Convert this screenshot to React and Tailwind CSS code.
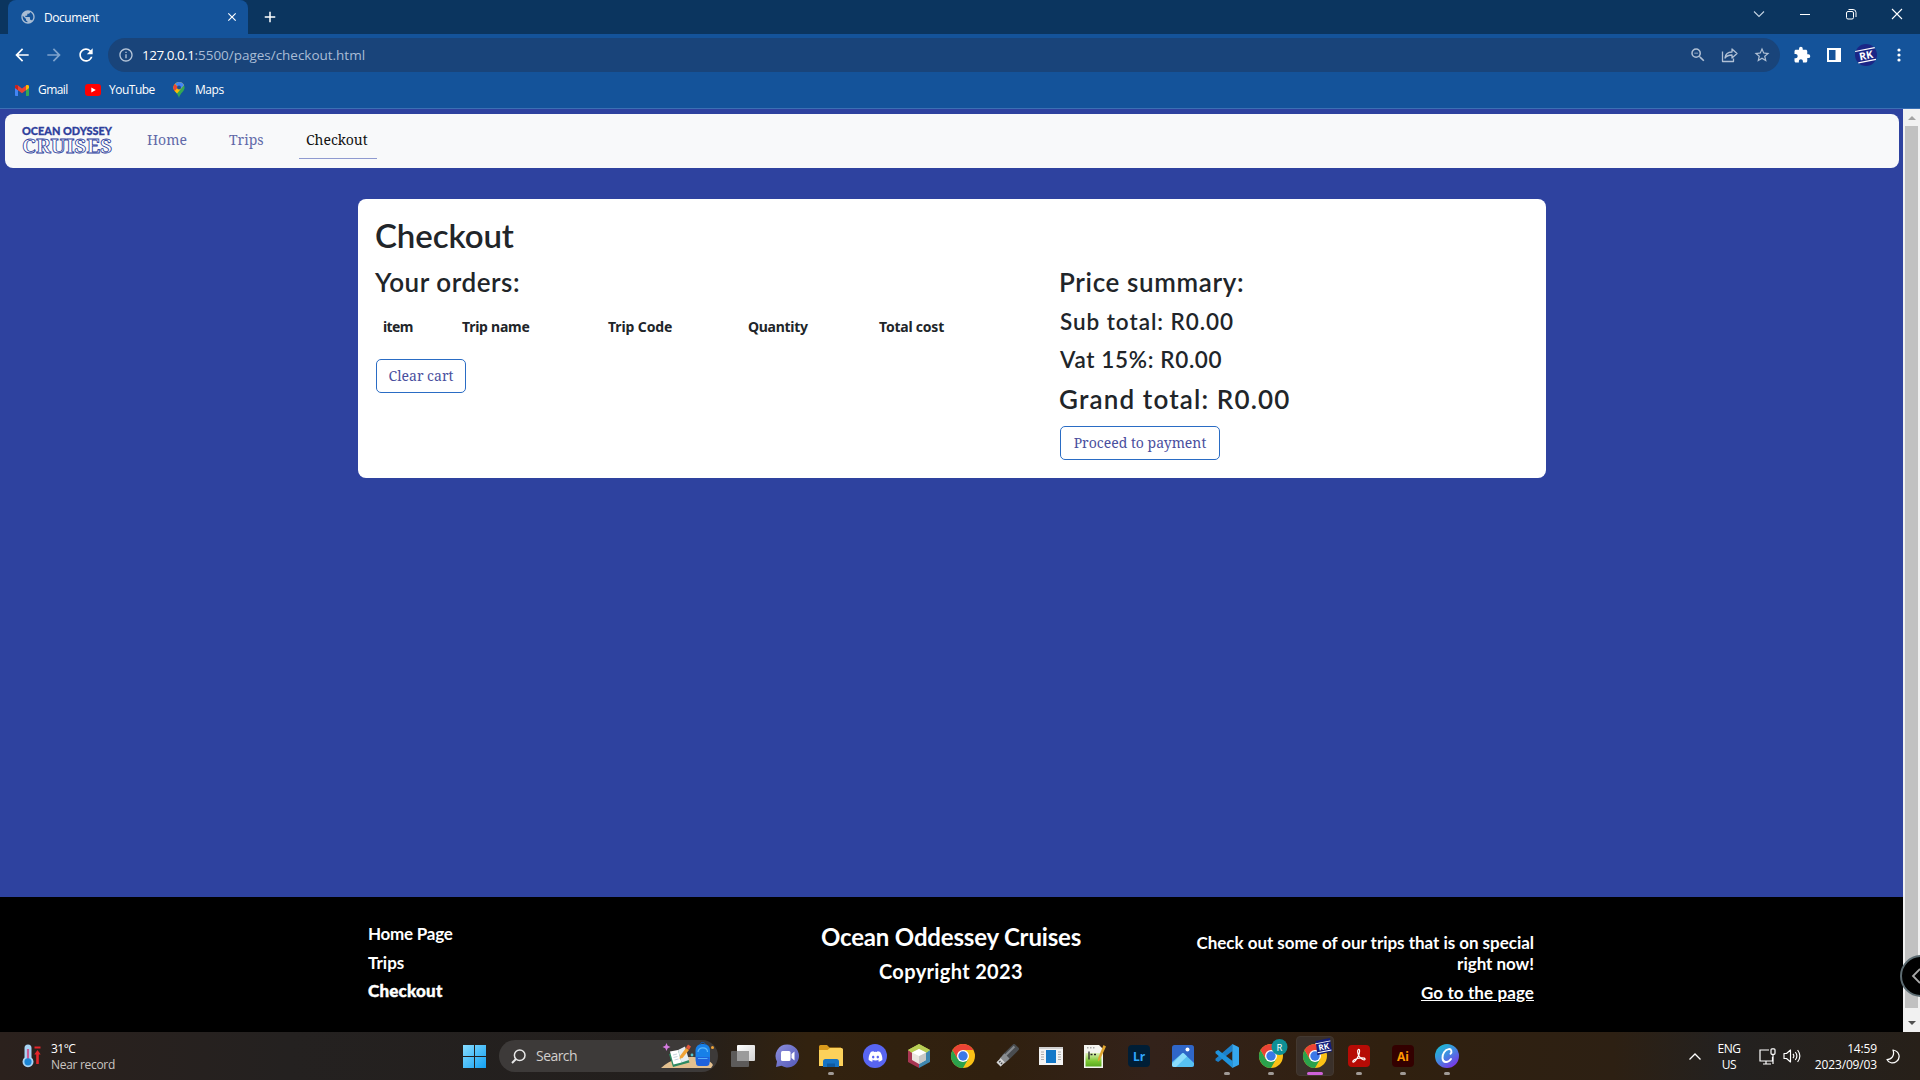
import React from "react";
import { MdExtension, MdStarBorder, MdInfoOutline, MdArrowBack, MdArrowForward, MdRefresh, MdPublic, MdZoomOut, MdClose, MdAdd } from "react-icons/md";
import { FaDiscord } from "react-icons/fa";

/* ---------- browser chrome ---------- */

function TabStrip() {
  return (
    <div className="flex h-[34px] bg-[#0b355f] text-white">
      <div className="ml-2 flex h-full w-[240px] items-center rounded-t-lg bg-[#14539a] pr-[9px] pl-3">
        <MdPublic className="size-4 text-[#a9bdd4]" />
        <span className="ml-2 pt-px text-[12px] leading-4 tracking-[-0.45px]">Document</span>
        <MdClose className="ml-auto size-[14px]" />
      </div>
      <MdAdd className="mt-[8px] ml-[13px] size-[18px]" />
      <div className="ml-auto flex pr-[17px]">
        <div className="flex h-7 w-[46px] items-center justify-center">
          <svg width="12" height="12" viewBox="0 0 12 12" fill="none" stroke="#c5d3e2" strokeWidth="1.1"><path d="M1 3.5l5 5 5-5" /></svg>
        </div>
        <div className="flex h-7 w-[46px] items-center justify-center">
          <svg width="12" height="12" viewBox="0 0 12 12" stroke="#fff" strokeWidth="1"><path d="M1 6.500h10" /></svg>
        </div>
        <div className="flex h-7 w-[46px] items-center justify-center">
          <svg width="12" height="12" viewBox="0 0 12 12" fill="none" stroke="#fff" strokeWidth="1"><rect x="1.5" y="3.500" width="7" height="7.500" rx="1.500" /><path d="M3.500 1.500h4.500a3 3 0 0 1 3 3v4.500" /></svg>
        </div>
        <div className="flex h-7 w-[29px] items-center justify-end">
          <svg width="12" height="12" viewBox="0 0 12 12" stroke="#fff" strokeWidth="1.1"><path d="M1 1l10 10M11 1L1 11" /></svg>
        </div>
      </div>
    </div>
  );
}

function Toolbar() {
  return (
    <div className="flex h-[41px] items-center bg-[#14539a] text-white">
      <MdArrowBack className="ml-3 size-5" />
      <MdArrowForward className="ml-3 size-5 text-[#7ea3cd]" />
      <MdRefresh className="ml-3 size-5" />
      <div className="ml-[12px] flex h-[34px] w-[1672px] items-center rounded-full bg-[#19447a] pr-[9px] pl-[10px]">
        <MdInfoOutline className="size-4 text-[#b5c5d9]" />
        <span className="ml-2 text-[13.5px] leading-5 tracking-[-0.02px] text-[#a9bdd6]">
          <span className="tracking-[-0.5px] text-white">127.0.0.1</span>:5500/pages/checkout.html
        </span>
        <MdZoomOut className="ml-auto size-[18px] text-[#b0c0d5]" />
        <svg className="ml-[14px]" width="17" height="16" viewBox="0 0 17 16" fill="none" stroke="#b0c0d5" strokeWidth="1.3"><path d="M1.500 4.500v10h11v-3M4 11c.5-4 2.500-6 7-6V2l5 4.500L11 11V8c-3.500 0-5.500 1-7 3z" strokeLinejoin="round" /></svg>
        <MdStarBorder className="ml-[15px] size-[18px] text-[#b0c0d5]" />
      </div>
      <MdExtension className="ml-[13px] size-[18px]" />
      <svg className="ml-4" width="14" height="14" viewBox="0 0 14 14"><path d="M1 1h12v12H1z" fill="none" stroke="#fff" strokeWidth="2" /><path d="M8.500 0H14v14H8.500z" fill="#fff" /></svg>
      <svg className="ml-[14px]" width="22" height="22" viewBox="0 0 22 22">
        <circle cx="11" cy="11" r="11" fill="#1b2686" />
        <RkMark />
      </svg>
      <svg className="ml-5" width="4" height="14" viewBox="0 0 4 14" fill="#fff"><circle cx="2" cy="2" r="1.600" /><circle cx="2" cy="7" r="1.600" /><circle cx="2" cy="12" r="1.600" /></svg>
    </div>
  );
}

function RkMark() {
  return (
    <g transform="rotate(-11 11 11)">
      <path d="M1 5.500h20M2 17.200h18" stroke="#fff" strokeWidth="1.200" />
      <text x="11" y="15.200" textAnchor="middle" fontFamily="Open Sans" fontSize="10.500" fontWeight="700" fill="#fff">RK</text>
    </g>
  );
}

function Bookmarks() {
  return (
    <div className="flex h-[34px] items-center border-b border-[#3c70b4] bg-[#14539a] pb-[3px] pl-[15px] text-[12px] leading-4 text-white">
      <svg width="14" height="11" viewBox="0 0 14 11"><path d="M0 2v8.200c0 .5.300.800.800.800H3V5z" fill="#4285f4" /><path d="M14 2v8.200c0 .5-.3.800-.8.800H11V5z" fill="#34a853" /><path d="M0 1.600C0 .200 1.600-.500 2.700.300L7 3.600 11.300.300C12.400-.500 14 .200 14 1.600V3L7 8.200 0 3z" fill="#ea4335" /><path d="M11.300.300C12.400-.500 14 .200 14 1.600V3l-3 2.200V.500z" fill="#fbbc04" /><path d="M0 1.600C0 .200 1.600-.500 2.700.300L3 .500v4.700L0 3z" fill="#c5221f" /></svg>
      <span className="ml-[9px] w-[47px] tracking-[-0.55px]">Gmail</span>
      <svg width="16" height="12" viewBox="0 0 16 12"><rect width="16" height="12" rx="3" fill="#f00" /><path d="M6.300 3.400v5.200L10.800 6z" fill="#fff" /></svg>
      <span className="ml-2 w-[64px] tracking-[-0.5px]">YouTube</span>
      <svg width="12" height="16" viewBox="0 0 12 16">
        <path d="M6 0a5.600 5.600 0 0 1 5.600 5.600C11.600 9.500 7.300 10.800 6 16 4.700 10.800.4 9.500.4 5.600A5.600 5.600 0 0 1 6 0z" fill="#34a853" />
        <path d="M6 0a5.600 5.600 0 0 1 5 3.200L4 11.500C2 9.600.4 8.200.4 5.600A5.600 5.600 0 0 1 6 0z" fill="#fbbc04" />
        <path d="M6 0a5.600 5.600 0 0 1 5 3.200L7.500 7 2 2C3 .800 4.400 0 6 0z" fill="#4285f4" />
        <path d="M1.700 2L5 5 1.600 9.200C.900 8.200.4 7 .4 5.600c0-1.400.5-2.600 1.300-3.600z" fill="#ea4335" />
        <circle cx="6" cy="5.600" r="2" fill="#1a4f94" />
      </svg>
      <span className="ml-[10px] tracking-[-0.45px]">Maps</span>
    </div>
  );
}

/* ---------- web page ---------- */

function Logo() {
  return (
    <svg className="overflow-visible" width="94" height="34" viewBox="0 0 94 34">
      <text x="1" y="10.200" textLength="90" lengthAdjust="spacingAndGlyphs" fontFamily="Lato" fontWeight="900" fontSize="11.500" fill="#2e3f9c" stroke="#2e3f9c" strokeWidth="0.300">OCEAN ODYSSEY</text>
      <text x="1" y="27.800" textLength="90" lengthAdjust="spacingAndGlyphs" fontFamily="Noto Serif, Liberation Serif" fontWeight="700" fontSize="19.500" fill="#fff" stroke="#2e3f9c" strokeWidth="0.800">CRUISES</text>
    </svg>
  );
}

function Navbar() {
  return (
    <nav className="mr-1 ml-[5px] flex h-[54px] rounded-lg bg-[#f8f9fa] font-['Noto_Serif','DejaVu_Serif_Condensed',serif] text-[14px] leading-5">
      <div className="ml-4 pt-[11px]"><Logo /></div>
      <div className="flex pt-4 text-[#6169a8]">
        <span className="ml-8 w-[82px]">Home</span>
        <span className="w-[70px]">Trips</span>
        <span className="h-[29px] w-[78px] border-b border-[#8f9ad0] pl-[7px] text-[#111]">Checkout</span>
      </div>
    </nav>
  );
}

function OutlineButton({ className, children }) {
  return (
    <button className={"block h-[34px] rounded-[5px] border border-[#2a6cc4] text-center font-['Noto_Serif','DejaVu_Serif_Condensed',serif] text-[14px] leading-5 font-normal whitespace-nowrap text-[#4a4f9e] " + className}>
      {children}
    </button>
  );
}

function CheckoutCard() {
  return (
    <main className="mt-[31px] ml-[358px] h-[279px] w-[1188px] rounded-lg bg-white pt-4 pl-[18px] font-[Lato] font-semibold text-[#212529]">
      <h1 className="-ml-px text-[33px] leading-10 tracking-[-0.1px]">Checkout</h1>
      <div className="flex pt-[11px]">
        <section className="w-[684px]">
          <h2 className="-ml-px text-[26px] leading-8 tracking-[0.55px]">Your orders:</h2>
          <div className="mt-[19px] flex pl-[7px] font-['Noto_Sans'] text-[14px] leading-5 font-bold">
            <span className="w-[79px] tracking-[-0.6px]">item</span>
            <span className="w-[146px] tracking-[-0.25px]">Trip name</span>
            <span className="w-[140px] tracking-[-0.1px]">Trip Code</span>
            <span className="w-[131px] tracking-[-0.28px]">Quantity</span>
            <span className="tracking-[-0.22px]">Total cost</span>
          </div>
          <OutlineButton className="mt-[22px] w-[90px]">Clear cart</OutlineButton>
        </section>
        <section>
          <h2 className="-ml-px text-[26px] leading-8 tracking-[0.65px]">Price summary:</h2>
          <h3 className="mt-2.5 text-[22.5px] leading-7 tracking-[0.95px]">Sub total: R0.00</h3>
          <h3 className="mt-2.5 text-[22.5px] leading-7 tracking-[0.65px]">Vat 15%: R0.00</h3>
          <h2 className="mt-[9px] -ml-px text-[26px] leading-8 tracking-[1.15px]">Grand total: R0.00</h2>
          <OutlineButton className="mt-[11px] w-[160px]">Proceed to payment</OutlineButton>
        </section>
      </div>
    </main>
  );
}

function Footer() {
  return (
    <footer className="mt-auto h-[135px] bg-black pt-px pl-[368px] font-[Lato] font-bold text-white">
      <div className="grid w-[1166px] grid-cols-3 text-[17px]">
        <div className="flex flex-col pt-[26px] leading-5">
          <a className="tracking-[-0.25px]">Home Page</a>
          <a className="mt-[9px]">Trips</a>
          <a className="mt-2 font-black tracking-[0.2px] [-webkit-text-stroke:0.4px_white]">Checkout</a>
        </div>
        <div className="pt-[25px] text-center">
          <p className="text-[24px] leading-7 tracking-[-0.18px]">Ocean Oddessey Cruises</p>
          <p className="mt-2 text-[20px] leading-6 tracking-[0.35px]">Copyright 2023</p>
        </div>
        <div className="pt-[34px] text-right leading-[21px] tracking-[-0.03px]">
          <p>Check out some of our trips that is on special<br />right now!</p>
          <a className="mt-2 block tracking-[0.1px] underline">Go to the page</a>
        </div>
      </div>
    </footer>
  );
}

function Scrollbar() {
  return (
    <div className="relative flex w-[17px] flex-col items-center bg-[#f1f1f1]">
      <div className="flex h-[17px] items-center"><svg width="8" height="4" viewBox="0 0 8 4"><path d="M0 4l4-4 4 4z" fill="#a3a3a3" /></svg></div>
      <div className="w-[13px] flex-1 bg-[#c1c1c1]" />
      <div className="flex h-6 items-center pt-1.5"><svg width="8" height="4" viewBox="0 0 8 4"><path d="M0 0l4 4 4-4z" fill="#505050" /></svg></div>
      <div className="absolute top-[846px] left-[-3px] h-[42px] w-5 overflow-hidden">
        <div className="flex size-[42px] items-center rounded-full border-2 border-[#5d6c72] bg-black pl-[9px]">
          <svg width="12" height="16" viewBox="0 0 12 16" fill="none" stroke="#a8a8a8" strokeWidth="1.800"><path d="M9 1L2 8l7 7" /></svg>
        </div>
      </div>
    </div>
  );
}

/* ---------- taskbar ---------- */

function Chrome({ badge }) {
  return (
    <svg className="overflow-visible" width="24" height="24" viewBox="0 0 24 24">
      <circle cx="12" cy="12" r="12" fill="#fbc116" />
      <path d="M17.200 15L12 24A12 12 0 0 1 1.600 6l5.200 9z" fill="#2ba24c" />
      <path d="M1.600 6A12 12 0 0 1 22.400 6H12l-5.200 9z" fill="#ea4335" />
      <circle cx="12" cy="12" r="6" fill="#fff" />
      <circle cx="12" cy="12" r="4.700" fill="#3b78e7" />
      {badge === "R" && (
        <g><circle cx="20.500" cy="3" r="8" fill="#0e8f96" /><text x="20.500" y="6.500" textAnchor="middle" fontSize="9.500" fontFamily="Open Sans" fill="#fff">R</text></g>
      )}
      {badge === "RK" && (
        <g transform="translate(12 -6) scale(.78)"><path d="M1 4l18-4 3 17-19 5z" fill="#141f7c" /><RkMark /></g>
      )}
    </svg>
  );
}

function AppTile({ bg, fg, children }) {
  return (
    <svg width="22" height="22" viewBox="0 0 22 22">
      <rect width="22" height="22" rx="4" fill={bg} />
      <text x="11" y="15.500" textAnchor="middle" fontSize="12" fontWeight="700" fontFamily="Open Sans" fill={fg}>{children}</text>
    </svg>
  );
}

const TaskView = () => (
  <svg width="24" height="22" viewBox="0 0 24 22">
    <defs><linearGradient id="tv" x1="0" y1="0" x2="1" y2="1"><stop stopColor="#fff" /><stop offset="1" stopColor="#d2d2d2" /></linearGradient></defs>
    <rect x="6" width="18" height="16" rx="1" fill="url(#tv)" /><path d="M1 6h17v15a1 1 0 0 1-1 1H1a1 1 0 0 1-1-1V7a1 1 0 0 1 1-1z" fill="#5d5b5a" /><path d="M6 6h12v10H6z" fill="#9b9b9b" />
  </svg>
);
const Teams = () => (
  <svg width="24" height="24" viewBox="0 0 24 24">
    <defs><linearGradient id="tm" x1="0" y1="0" x2="1" y2="1"><stop stopColor="#8d8fdc" /><stop offset="1" stopColor="#5358b8" /></linearGradient></defs>
    <path d="M12.500.500a11.500 11.500 0 1 1-6 21.300L1 23l1-5.500A11.500 11.500 0 0 1 12.500.500z" fill="url(#tm)" /><rect x="6" y="7" width="9.500" height="10" rx="1.500" fill="#fff" /><path d="M16.500 10l3-2.500v9l-3-2.500z" fill="#fff" />
  </svg>
);
const Explorer = () => (
  <svg width="24" height="22" viewBox="0 0 24 22">
    <path d="M0 1.500A1.500 1.500 0 0 1 1.500 0H8l2.500 2.500H22V8H0z" fill="#d99a1c" /><path d="M0 5h8.500l2.500-2h11.500A1.500 1.500 0 0 1 24 4.500V21H0z" fill="#fcd15a" /><path d="M4 21v-4.500A2.500 2.500 0 0 1 6.500 14h11a2.500 2.500 0 0 1 2.500 2.500V22H4z" fill="#1673c4" /><path d="M8 21v-2.500h8V22H8z" fill="#0f5aa0" />
  </svg>
);
const Discord = () => (
  <div className="flex size-6 items-center justify-center rounded-full bg-[#5865f2] text-white"><FaDiscord className="size-[15px]" /></div>
);
const NetBeans = () => (
  <svg width="22" height="24" viewBox="0 0 22 24">
    <path d="M11 0L0 6v6l11-5 11 5V6z" fill="#a9c84a" /><path d="M0 6l11 6v12L0 18z" fill="#a83552" /><path d="M22 6l-11 6v12l11-6z" fill="#3f88b0" /><path d="M11 0l11 6-4 3-7-3-7 3-4-3z" fill="#b9ce55" /><path d="M11 5l7 3.500v7.500l-7 4-7-4V8.500z" fill="#e9e6e0" /><path d="M11 12l7-3.500v7.500l-7 4z" fill="#c9c9c7" /><path d="M11 5l7 3.500-7 3.500-7-3.500z" fill="#fff" />
  </svg>
);
const Usb = () => (
  <svg width="24" height="24" viewBox="0 0 24 24">
    <g transform="rotate(45 12 12)"><rect x="8" y="-2" width="8" height="18" rx="2" fill="#4a4d50" /><path d="M9.500 0h2v15h-2z" fill="#85898d" /><rect x="8.500" y="12" width="7" height="7" fill="#8a8d90" /><rect x="9" y="18" width="6" height="6" rx=".5" fill="#d5d5d5" /><path d="M10.200 20h1.300v2h-1.300zM12.700 20h1.300v2h-1.300z" fill="#444" /></g>
  </svg>
);
const WindowApp = () => (
  <svg width="24" height="18" viewBox="0 0 24 18">
    <path d="M0 0h24v18H0z" fill="#f3f3f3" /><path d="M0 0h24v2H0z" fill="#cfcfcf" /><path d="M7 3h10v13H7z" fill="#1478c8" /><path d="M2 5h3M2 7.500h3M2 10h3M2 12.500h3M19 5h3M19 7.500h3M19 10h3M19 12.500h3" stroke="#999" strokeWidth=".8" />
  </svg>
);
const Notepad = () => (
  <svg width="22" height="24" viewBox="0 0 22 24">
    <defs><linearGradient id="np" x1="0" y1="0" x2="0" y2="1"><stop stopColor="#dff0b8" /><stop offset=".6" stopColor="#7cc832" /><stop offset="1" stopColor="#5aa820" /></linearGradient></defs>
    <path d="M0 1h15l4 4v19H0z" fill="#f4f4f0" /><path d="M1.500 9H17.500v13.500H1.500z" fill="url(#np)" /><path d="M3 3h1.500v1.500H3zM6 3h1.500v1.500H6zM9 3h1.500v1.500H9z" fill="#aaa" /><path d="M5 7.500v8" stroke="#222" strokeWidth="1.300" /><path d="M6.500 10.500h2M10 10.500h2" stroke="#222" strokeWidth="1.500" /><path d="M19.500 1l2.500 1.500-6 13-2 2v-3z" fill="#e1a630" />
  </svg>
);
const Photos = () => (
  <svg width="22" height="22" viewBox="0 0 22 22">
    <rect width="22" height="22" rx="2.500" fill="#2f66c8" /><path d="M0 17L10 8.500a1.500 1.500 0 0 1 2 0L22 18v1.500a2.500 2.500 0 0 1-2.500 2.500h-17A2.500 2.500 0 0 1 0 19.500z" fill="#57c1f2" /><path d="M0 19l10-10.500a1.500 1.500 0 0 1 2 0l3 3L4 22H2.500A2.500 2.500 0 0 1 0 19.500z" fill="#8bdcfb" /><circle cx="15.500" cy="4.500" r="2" fill="#fff" />
  </svg>
);
const VsCode = () => (
  <svg width="24" height="24" viewBox="0 0 24 24">
    <path d="M17.500 0v7L3.200 18 .5 16.500v-1.700z" fill="#1c7fc8" /><path d="M17.500 24v-7L3.200 6 .5 7.500v1.700z" fill="#1f93dd" /><path d="M17.300 0L23 2.700a1.500 1.500 0 0 1 1 1.400v15.800a1.500 1.500 0 0 1-1 1.400L17.300 24z" fill="#35a7ee" />
  </svg>
);
const Acrobat = () => (
  <svg width="22" height="22" viewBox="0 0 22 22">
    <rect width="22" height="22" rx="4" fill="#b60b05" /><path d="M10.300 4.500c1.800-.8 1.600 3 0 6.500-1.700 3.800-4.200 6.800-5.300 6-1.200-1.200 3.300-3.800 7.500-4.200 3.300-.3 5 .7 4.500 1.600-.8 1.300-4.300-.6-5.800-3-1.700-2.700-2-6.300-.9-6.900z" fill="none" stroke="#fff" strokeWidth="1.200" />
  </svg>
);
const Canva = () => (
  <svg width="24" height="24" viewBox="0 0 24 24">
    <defs><linearGradient id="cv" x1="0" y1="0" x2=".7" y2="1"><stop stopColor="#12c5cf" /><stop offset=".5" stopColor="#3f8fe0" /><stop offset="1" stopColor="#7a35e8" /></linearGradient></defs>
    <circle cx="12" cy="12" r="12" fill="url(#cv)" /><path d="M15.500 9.800c1.800-1.600 1-5-1.800-4.700-3.600.4-6.600 5-6.200 9 .4 5 5.400 5.200 8.500.9" fill="none" stroke="#fff" strokeWidth="1.900" strokeLinecap="round" />
  </svg>
);

const apps = [
  { icon: <TaskView /> },
  { icon: <Teams /> },
  { icon: <Explorer />, open: true },
  { icon: <Discord /> },
  { icon: <NetBeans /> },
  { icon: <Chrome /> },
  { icon: <Usb /> },
  { icon: <WindowApp /> },
  { icon: <Notepad /> },
  { icon: <AppTile bg="#001e36" fg="#31a8ff">Lr</AppTile> },
  { icon: <Photos /> },
  { icon: <VsCode />, open: true },
  { icon: <Chrome badge="R" />, open: true },
  { icon: <Chrome badge="RK" />, active: true },
  { icon: <Acrobat />, open: true },
  { icon: <AppTile bg="#330000" fg="#ff9a00">Ai</AppTile>, open: true },
  { icon: <Canva />, open: true },
];

function SearchArt() {
  return (
    <svg width="56" height="28" viewBox="0 0 56 28">
      <path d="M0 26C9 17 22 15 32 15c10 0 17 3 20 8l-2 3z" fill="#e3c08f" />
      <path d="M8 12l16-5 4.500 13.500L12 25z" fill="#2c8a62" />
      <path d="M9 9.500l8-1.500 3.500 12.500-8 2z" fill="#fff" /><path d="M17 8l7-3.500 4 13.500-7.500 2.500z" fill="#e6edf2" />
      <path d="M12 13l4-1M12.500 15.500l4-1M13.500 18l4-1" stroke="#b9c7d4" strokeWidth=".8" />
      <path d="M19 14l6-8 3 2-6.500 8-3 .8z" fill="#f0a336" /><path d="M25 5.500l2-3 3 2-2 3.500z" fill="#e0583c" />
      <path d="M5.500 1l1.200 2.800L9.500 5l-2.800 1.200L5.500 9 4.300 6.200 1.500 5l2.800-1.200z" fill="#d57be0" />
      <rect x="34.500" y="2" width="14.500" height="22" rx="6" fill="#1780e8" />
      <path d="M35 15h13.500v6a3 3 0 0 1-3 3H38a3 3 0 0 1-3-3z" fill="#1f62dc" />
      <path d="M37 10c0-5.500 9.500-5.500 9.500 0" fill="none" stroke="#5cb8fa" strokeWidth="1.200" /><path d="M37 16.500h9.500" stroke="#5cb8fa" strokeWidth=".9" />
      <path d="M39.500 2.500c0-3 4.500-3 4.500 0" fill="none" stroke="#1460c0" />
      <circle cx="51.500" cy="5.500" r="1.500" fill="#f0a336" /><circle cx="31" cy="13" r="1.400" fill="#53c6cf" />
    </svg>
  );
}

function Taskbar() {
  return (
    <div className="flex h-12 bg-[linear-gradient(90deg,#2b211d_0%,#242120_15%,#231f1d_35%,#32220f_42%,#30200f_52%,#33221a_60%,#30200f_72%,#2d2013_84%,#232120_90%,#272019_100%)] text-[12px] leading-4 text-white">
      <div className="flex w-[462px] items-center pl-[22px]">
        <svg width="20" height="24" viewBox="0 0 20 24">
          <path d="M2.500 4a3.500 3.500 0 0 1 7 0v9.500a5.500 5.500 0 1 1-7 0z" fill="#a9d4f5" /><path d="M6 5v13" stroke="#c95d96" strokeWidth="2.200" /><circle cx="6" cy="17.800" r="3.600" fill="#1b86d6" /><path d="M12.500 3.500h6" stroke="#e5252a" strokeWidth="2" /><path d="M15.500 20V9" stroke="#e5252a" strokeWidth="2.600" /><path d="M12.300 10.500l3.200-4.500 3.200 4.500z" fill="#e5252a" />
        </svg>
        <div className="ml-[9px] pt-0.5">
          <div className="tracking-[-0.5px]">31°C</div>
          <div className="tracking-[-0.3px] text-[#c9c5c2]">Near record</div>
        </div>
      </div>
      <div className="flex items-center">
        <svg width="24" height="24" viewBox="0 0 24 24">
          <defs><linearGradient id="win" x1="0" y1="0" x2="1" y2="1"><stop stopColor="#86dcff" /><stop offset="1" stopColor="#12a0f2" /></linearGradient></defs>
          <path d="M1 1h11v11H1zM13 1h11v11H13zM1 13h11v11H1zM13 13h11v11H13z" fill="url(#win)" />
        </svg>
        <div className="ml-[13px] flex h-8 w-[219px] items-center rounded-full bg-[#3d3a39] pr-px pl-3">
          <svg width="15" height="15" viewBox="0 0 15 15" fill="none" stroke="#e8e8e8" strokeWidth="1.500"><circle cx="8.700" cy="6.300" r="5.300" /><path d="M5 10l-4 4" strokeWidth="1.900" /></svg>
          <span className="ml-[10px] text-[14px] leading-5 tracking-[-0.55px] text-[#d2cfcd]">Search</span>
          <span className="ml-auto"><SearchArt /></span>
        </div>
        <div className="ml-[3px] flex">
          {apps.map((a, i) => (
            <div key={i} className="flex h-12 w-11 items-center justify-center">
              <div className={a.active ? "relative flex h-10 w-[38px] items-center justify-center rounded-[4px] border border-[#433830] bg-[#3a302a]" : "relative flex h-10 w-[38px] items-center justify-center"}>
                {a.icon}
                {a.open && <span className="absolute bottom-[1px] h-[3px] w-[6px] rounded-full bg-[#a09a96]" />}
                {a.active && <span className="absolute bottom-0 h-[3px] w-4 rounded-full bg-[#cf62d8]" />}
              </div>
            </div>
          ))}
        </div>
      </div>
      <div className="ml-auto flex items-center pr-[20px]">
        <svg width="12" height="7" viewBox="0 0 12 7" fill="none" stroke="#fff" strokeWidth="1.300"><path d="M.5 6.500L6 1l5.500 5.500" /></svg>
        <div className="ml-4 w-6 pt-px text-center tracking-[-0.5px]">ENG<br />US</div>
        <svg className="ml-[18px]" width="17" height="17" viewBox="0 0 17 17" fill="none" stroke="#fff" strokeWidth="1.200"><path d="M10 2H1v11h12.500V9M4 16h8M7 13v3" /><rect x="12" y=".8" width="4" height="5.500" rx="1" /><path d="M14 6.500V16" /></svg>
        <svg className="ml-[7px]" width="18" height="16" viewBox="0 0 18 16" fill="none" stroke="#fff" strokeWidth="1.150"><path d="M1 5.500h2.500L7.500 2v12l-4-3.500H1z" strokeLinejoin="round" /><path d="M10 5.800c1 1.300 1 3.100 0 4.400M12.300 4c1.900 2.400 1.900 5.600 0 8M14.600 2c2.700 3.600 2.700 8.400 0 12" /></svg>
        <div className="ml-[13px] w-[63px] pt-px text-right tracking-[-0.15px]">14:59<br />2023/09/03</div>
        <svg className="ml-[9px]" width="14" height="15" viewBox="0 0 14 15" fill="none" stroke="#fff" strokeWidth="1.250" strokeLinejoin="round"><path d="M7 1c6.500 1 8 8 3.500 11.500C7 15 2.500 14 1 10.500 5.500 10.500 9 6.500 7 1z" /></svg>
      </div>
    </div>
  );
}

export default function App() {
  return (
    <div className="flex h-[1080px] w-[1920px] flex-col overflow-hidden bg-[#2e429f] font-['Open_Sans',sans-serif]">
      <TabStrip />
      <Toolbar />
      <Bookmarks />
      <div className="flex flex-1">
        <div className="flex flex-1 flex-col pt-[5px]">
          <Navbar />
          <CheckoutCard />
          <Footer />
        </div>
        <Scrollbar />
      </div>
      <Taskbar />
    </div>
  );
}
